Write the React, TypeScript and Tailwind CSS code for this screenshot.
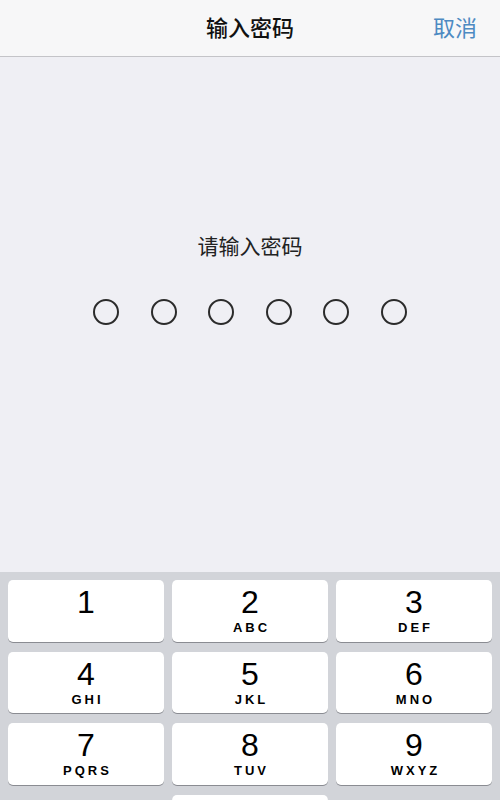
import React from "react";

const keys: { d: string; l?: string }[] = [
  { d: "1" },
  { d: "2", l: "ABC" },
  { d: "3", l: "DEF" },
  { d: "4", l: "GHI" },
  { d: "5", l: "JKL" },
  { d: "6", l: "MNO" },
  { d: "7", l: "PQRS" },
  { d: "8", l: "TUV" },
  { d: "9", l: "WXYZ" },
];

function Key({ d, l }: { d: string; l?: string }) {
  return (
    <div className="h-[61.5px] bg-white rounded-[5px] shadow-[0_1px_0_#8a8c92] flex flex-col items-center pt-[6px] text-black">
      <div className="text-[32px] leading-[32px] font-['Liberation_Sans',Arial,sans-serif]">{d}</div>
      {l && (
        <div className="mt-[3px] text-[13px] leading-[13px] font-bold tracking-[3px] pl-[3px] font-['Liberation_Sans',Arial,sans-serif]">
          {l}
        </div>
      )}
    </div>
  );
}

export default function App() {
  return (
    <div className="w-[500px] h-[800px] overflow-hidden flex flex-col bg-[#efeff4] font-['Noto_Sans_CJK_SC',sans-serif]">
      <div className="h-[57px] shrink-0 bg-[#f7f7f8] border-b border-[#c4c4c8] relative flex items-center justify-center pb-[4px]">
        <div className="text-[22px] font-medium text-[#111] leading-none">输入密码</div>
        <div className="absolute right-[23px] top-0 h-full flex items-center pb-[4px] text-[22px] text-[#4d8ac2] leading-none">
          取消
        </div>
      </div>
      <div className="h-[515px] shrink-0 flex flex-col items-center pt-[174px]">
        <div className="text-[21px] leading-[28px] text-[#222]">请输入密码</div>
        <div className="mt-[40px] flex gap-[31.5px]">
          {Array.from({ length: 6 }).map((_, i) => (
            <div key={i} className="w-[26px] h-[26px] rounded-full border-2 border-[#2b2b2b]" />
          ))}
        </div>
      </div>
      <div className="flex-1 bg-[#d2d4d9] px-[8px] pt-[8px]">
        <div className="grid grid-cols-3 gap-x-[8px] gap-y-[10px]">
          {keys.map((k) => (
            <Key key={k.d} d={k.d} l={k.l} />
          ))}
          <div />
          <Key d="0" />
          <div />
        </div>
      </div>
    </div>
  );
}
